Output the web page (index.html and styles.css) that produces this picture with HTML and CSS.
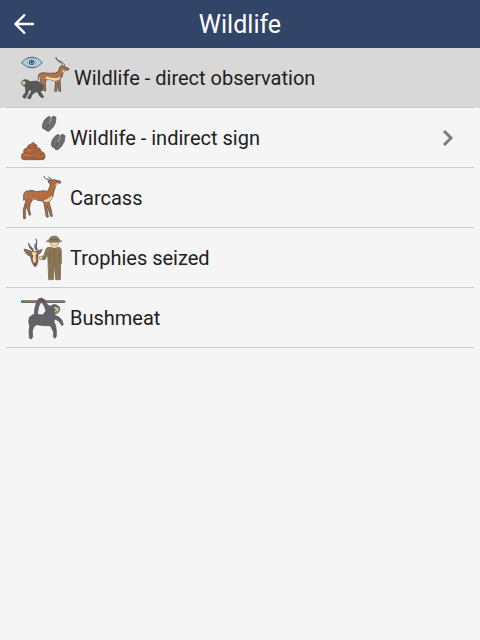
FILE: index.html
```
<!DOCTYPE html>
<html lang="en">
<head>
<meta charset="utf-8">
<meta name="viewport" content="width=device-width, initial-scale=1">
<title>Wildlife</title>
<link rel="stylesheet" href="styles.css">
</head>
<body>
<header class="bar">
  <button class="back" type="button" aria-label="Back">
    <svg width="24" height="24" viewBox="0 0 24 24" fill="none" stroke="#fff" stroke-width="2.4"><path d="M22 12H4M13 2.500L3.500 12l9.500 9.500"/></svg>
  </button>
  <h1 class="title">Wildlife</h1>
</header>
<main>
<ul class="list">
  <li class="item selected"><a class="row" href="#direct">
    <svg class="icon wide" viewBox="15 12 147 144" aria-hidden="true">
      <path d="M16 38Q30 21 48 21T79 38Q65 54 48 54T16 38Z" fill="#a9d5ef" stroke="#5b6570" stroke-width="3"/>
      <circle cx="47" cy="37" r="13" fill="#f3f7f9" stroke="#65717a" stroke-width="2"/>
      <circle cx="47" cy="37" r="7.500" fill="#6eb0d3" stroke="#3b454f" stroke-width="3"/>
      <circle cx="47" cy="37" r="3" fill="#28323c"/>
      <path d="M138 50C142 42 135 39 129 35C122 30 119 27 120 22M143 50C150 44 142 38 135 35C126 32 122 28 120 22" fill="none" stroke="#50504f" stroke-width="2.800"/>
      <path d="M132 50L139 47L147 51L158 55L158 60L148 61L141 68L138 80L132 89L133 103L134 124L129 124L125 98L122 124L116 124L119 94L101 88L91 87L88 100L89 123L84 123L81 103L79 122L74 122L76 100L72 87L67 91L67 79Q68 69 79 68L100 70L119 69L127 64Z" fill="#b27348" stroke="#55514b" stroke-width="2.500" stroke-linejoin="round"/>
      <path d="M88 86L103 89L119 93L132 87L134 80L121 85L104 83L91 79ZM139 61L148 61L140 69Z" fill="#f1d8b1"/>
      <path d="M70 82V93" stroke="#f1d8b1" stroke-width="3"/>
      <circle cx="147" cy="54" r="1.500" fill="#333"/>
      <path d="M20 92L26 89L34 90L42 95L60 93Q73 94 78 106L79 116L73 125L80 136L83 139L80 144L72 139L64 125L57 127L49 133L43 146L35 145L38 138L46 125L44 119L38 121L35 131L28 145L20 141L23 135L29 127L29 111L25 109L18 104L16 97Z" fill="#58585b" stroke="#464649" stroke-width="2" stroke-linejoin="round"/>
      <path d="M18 93L27 93L29 99L25 106L19 104L16 99Z" fill="#eed3a7" stroke="#625d56" stroke-width="1.500"/>
      <path d="M20 98h3" fill="none" stroke="#403f43" stroke-width="2"/>
    </svg>
    <span>Wildlife - direct observation</span></a></li>
  <li class="item"><a class="row" href="#indirect">
    <svg class="icon" viewBox="15 12 135 144" aria-hidden="true">
      <g fill="#6c6c70" stroke="#4e4e52" stroke-width="2" stroke-linejoin="round">
        <path d="M101 19L94 22Q80 32 79 51L82 57L88 58L92 63L99 64Q113 53 118 39L120 22L111 18L105 26Z"/>
        <path d="M128 73L121 76Q107 86 106 104L109 111L115 113L119 119L126 119Q140 108 145 94L147 77L138 72L132 80Z"/>
      </g>
      <path d="M105 25Q104 34 99 42M132 79Q131 87 126 96" fill="none" stroke="#dcdcdc" stroke-width="2"/>
      <path d="M99 42L89 58M126 96L116 113" fill="none" stroke="#515156" stroke-width="2"/>
      <path d="M101 22Q91 35 88 50M128 76Q118 89 115 104M113 25Q112 42 98 57M140 79Q139 96 125 111" fill="none" stroke="#77777b" stroke-width="2"/>
      <path d="M52 96Q54 99 57 102Q66 105 62 113Q76 113 74 124Q88 128 87 140Q87 149 78 149H25Q15 149 16 139Q17 130 24 128Q20 119 29 115L36 113Q32 106 43 103Q50 101 52 96Z" fill="#b4683d" stroke="#705548" stroke-width="2.500"/>
      <path d="M35 111Q42 118 62 113M47 107L61 108M24 127Q41 136 61 127M45 123L72 122M22 143Q43 147 60 139M64 133L82 133M48 146L82 145" fill="none" stroke="#835039" stroke-width="2.200"/>
      <path d="M37 120Q46 121 51 119M28 134Q36 137 44 136" fill="none" stroke="#d38a58" stroke-width="2"/>
    </svg>
    <span>Wildlife - indirect sign</span>
    <svg class="chevron" viewBox="0 0 12 18" fill="none" stroke="#7d7d7d" stroke-width="3" aria-hidden="true"><path d="M2 2l7 7-7 7"/></svg>
  </a></li>
  <li class="item"><a class="row" href="#carcass">
    <svg class="icon" viewBox="15 12 135 144" aria-hidden="true">
      <path d="M106 33C102 28 94 29 89 26Q85 24 84 18M110 31Q107 25 101 24Q98 23 97 20" fill="none" stroke="#4d5356" stroke-width="3"/>
      <path d="M98 31L107 31L115 29L121 31L133 33L134 39L122 42L118 51L113 67L110 82L103 92L99 96L105 117L109 139L104 139L94 109L93 117L97 141L91 141L86 112L83 94L66 91L52 86L43 100L40 117L44 134L40 136L34 115L32 107L28 122L28 146L23 146L22 119L29 95L27 84L23 91L23 74Q26 61 39 63L48 61L60 65L84 62L94 65L101 51L103 42L96 36Z" fill="#b56c42" stroke="#575551" stroke-width="2.500" stroke-linejoin="round"/>
      <path d="M83 91L93 88L104 80L109 77L109 84L98 95L87 96ZM120 40L132 39L123 43L117 52Z" fill="#f1d4ac"/>
      <path d="M31 68L28 86M42 77L50 84L67 90" fill="none" stroke="#d9a983" stroke-width="1.500"/>
      <path d="M42 67v2M53 68v2M62 70v2M74 69v2M88 72v2" stroke="#e2ac80" stroke-width="2"/>
      <circle cx="121" cy="35" r="1.500" fill="#333"/>
    </svg>
    <span>Carcass</span></a></li>
  <li class="item"><a class="row" href="#trophies">
    <svg class="icon" viewBox="15 12 135 144" aria-hidden="true">
      <path d="M52 61C48 51 37 48 38 40M64 60C54 48 68 40 60 27M50 61Q39 52 38 43M61 60Q54 51 58 42" fill="none" stroke="#5e6064" stroke-width="3.500" stroke-linecap="round"/>
      <path d="M96 52L90 57L83 78L71 80L71 87L87 89L95 72L96 97L98 149L112 149L115 101L119 149L133 149L134 102L136 101L136 63Q136 54 130 52Z" fill="#8b7651" stroke="#77736b" stroke-width="2.500" stroke-linejoin="round"/>
      <path d="M115 54V98M101 71V101M130 68V99" stroke="#6e6247" stroke-width="2"/>
      <path d="M103 34H127V42Q124 49 115 49T103 42Z" fill="#f6dab1" stroke="#777067" stroke-width="2"/>
      <path d="M107 52L115 55L124 52L121 48H109Z" fill="#f0d0a2"/>
      <path d="M90 34Q102 31 101 24Q105 18 115 18T128 24Q128 31 138 34Q129 37 115 37T90 34Z" fill="#8b7b5c" stroke="#777268" stroke-width="2"/>
      <path d="M102 29H128" stroke="#62594a" stroke-width="2"/>
      <path d="M24 57L35 60L49 65L63 64L78 58Q76 70 65 75L66 94L61 108L55 109L48 96L43 78Q30 76 24 57Z" fill="#966443" stroke="#625e58" stroke-width="2.500" stroke-linejoin="round"/>
      <path d="M47 68L55 65L63 68L59 76L60 94L55 99L51 94L50 77Z" fill="#f1d4ab"/>
      <path d="M29 61L39 71M73 62L66 69" stroke="#b08f78" stroke-width="2"/>
      <path d="M49 75v6M63 75v6M54 103h5" stroke="#45403d" stroke-width="3"/>
      <path d="M72 80L79 79L78 86L71 87Z" fill="#efcf9e"/>
    </svg>
    <span>Trophies seized</span></a></li>
  <li class="item"><a class="row" href="#bushmeat">
    <svg class="icon" viewBox="15 12 135 144" aria-hidden="true">
      <path d="M18 35H144" stroke="#62656a" stroke-width="8" stroke-linecap="round"/>
      <path d="M19 35H143" stroke="#b97143" stroke-width="3"/>
      <path fill-rule="evenodd" d="M67 27Q77 20 87 30L95 45L105 49L110 44L120 44L131 52L131 62L124 70L115 72L117 76L129 81L138 91L142 104L138 107L128 93L116 87L114 95L119 107L121 122L121 139L117 145L112 141L113 126L103 107L85 107L62 104L53 110L49 124L50 141L46 147L40 144L39 121L41 108L38 95L40 82L49 75L55 73L56 58L60 41ZM68 50L64 73L80 75L90 63L85 49L76 34Z" fill="#636367" stroke="#535357" stroke-width="2" stroke-linejoin="round"/>
      <path d="M111 50L120 50L128 55L129 63L121 69L114 66L119 59Z" fill="#eed0a0" stroke="#59544e" stroke-width="1.500"/>
      <path d="M70 30L80 28L87 36M121 58l3 2M119 64l5 1" fill="none" stroke="#48484b" stroke-width="2"/>
    </svg>
    <span>Bushmeat</span></a></li>
</ul>
</main>
</body>
</html>
```
FILE: styles.css
```
* {
  box-sizing: border-box;
}

body {
  margin: 0;
  background: #f5f5f5;
  color: #212121;
  font-family: Roboto, "Liberation Sans", sans-serif;
  font-size: 20px;
  text-rendering: optimizeSpeed;
}

.bar {
  display: grid;
  grid-template-columns: 48px 1fr 48px;
  align-items: center;
  height: 48px;
  background: #324468;
  color: #fff;
}

.back {
  display: flex;
  align-items: center;
  justify-content: center;
  height: 48px;
  padding: 0;
  border: 0;
  background: none;
  cursor: pointer;
}

.title {
  margin: 0;
  font-size: 25px;
  font-weight: 400;
  text-align: center;
}

.list {
  margin: 0;
  padding: 0;
  list-style: none;
}

.item {
  padding: 0 6px;
}

.selected {
  background: #d8d8d8;
}

.row {
  display: flex;
  align-items: center;
  gap: 4px;
  min-height: 60px;
  padding: 0 20px 0 15px;
  box-shadow: inset 0 -1px #cccccc;
  color: inherit;
  text-decoration: none;
}

.icon {
  flex: none;
  width: 45px;
  height: 48px;
}

.wide {
  width: 49px;
}

.chevron {
  flex: none;
  width: 12px;
  height: 18px;
  margin-left: auto;
}
```
